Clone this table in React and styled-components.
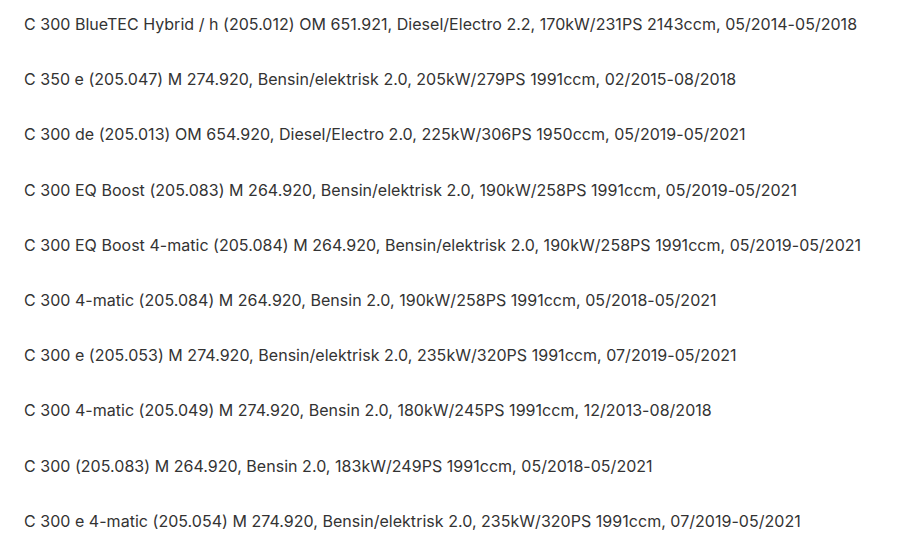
import React from "react";
import styled, { createGlobalStyle } from "styled-components";

const models = [
  "C 300 BlueTEC Hybrid / h (205.012) OM 651.921, Diesel/Electro 2.2, 170kW/231PS 2143ccm, 05/2014-05/2018",
  "C 350 e (205.047) M 274.920, Bensin/elektrisk 2.0, 205kW/279PS 1991ccm, 02/2015-08/2018",
  "C 300 de (205.013) OM 654.920, Diesel/Electro 2.0, 225kW/306PS 1950ccm, 05/2019-05/2021",
  "C 300 EQ Boost (205.083) M 264.920, Bensin/elektrisk 2.0, 190kW/258PS 1991ccm, 05/2019-05/2021",
  "C 300 EQ Boost 4-matic (205.084) M 264.920, Bensin/elektrisk 2.0, 190kW/258PS 1991ccm, 05/2019-05/2021",
  "C 300 4-matic (205.084) M 264.920, Bensin 2.0, 190kW/258PS 1991ccm, 05/2018-05/2021",
  "C 300 e (205.053) M 274.920, Bensin/elektrisk 2.0, 235kW/320PS 1991ccm, 07/2019-05/2021",
  "C 300 4-matic (205.049) M 274.920, Bensin 2.0, 180kW/245PS 1991ccm, 12/2013-08/2018",
  "C 300 (205.083) M 264.920, Bensin 2.0, 183kW/249PS 1991ccm, 05/2018-05/2021",
  "C 300 e 4-matic (205.054) M 274.920, Bensin/elektrisk 2.0, 235kW/320PS 1991ccm, 07/2019-05/2021",
];

const GlobalStyle = createGlobalStyle`
  body {
    margin: 0;
    background: #fff;
    font-family: Inter, "Noto Sans", sans-serif;
  }
`;

const List = styled.ul`
  list-style: none;
  margin: 0;
  padding: 12px 24px 0;
  display: flex;
  flex-direction: column;
  gap: 31.2px;
`;

const Row = styled.li`
  font-size: 16px;
  line-height: 24px;
  letter-spacing: 0.03px;
  color: #333;
  white-space: nowrap;
`;

const App = () => {
  return (
    <>
      <GlobalStyle />
      <List>
        {models.map((m) => (
          <Row key={m}>{m}</Row>
        ))}
      </List>
    </>
  );
};

export default App;
